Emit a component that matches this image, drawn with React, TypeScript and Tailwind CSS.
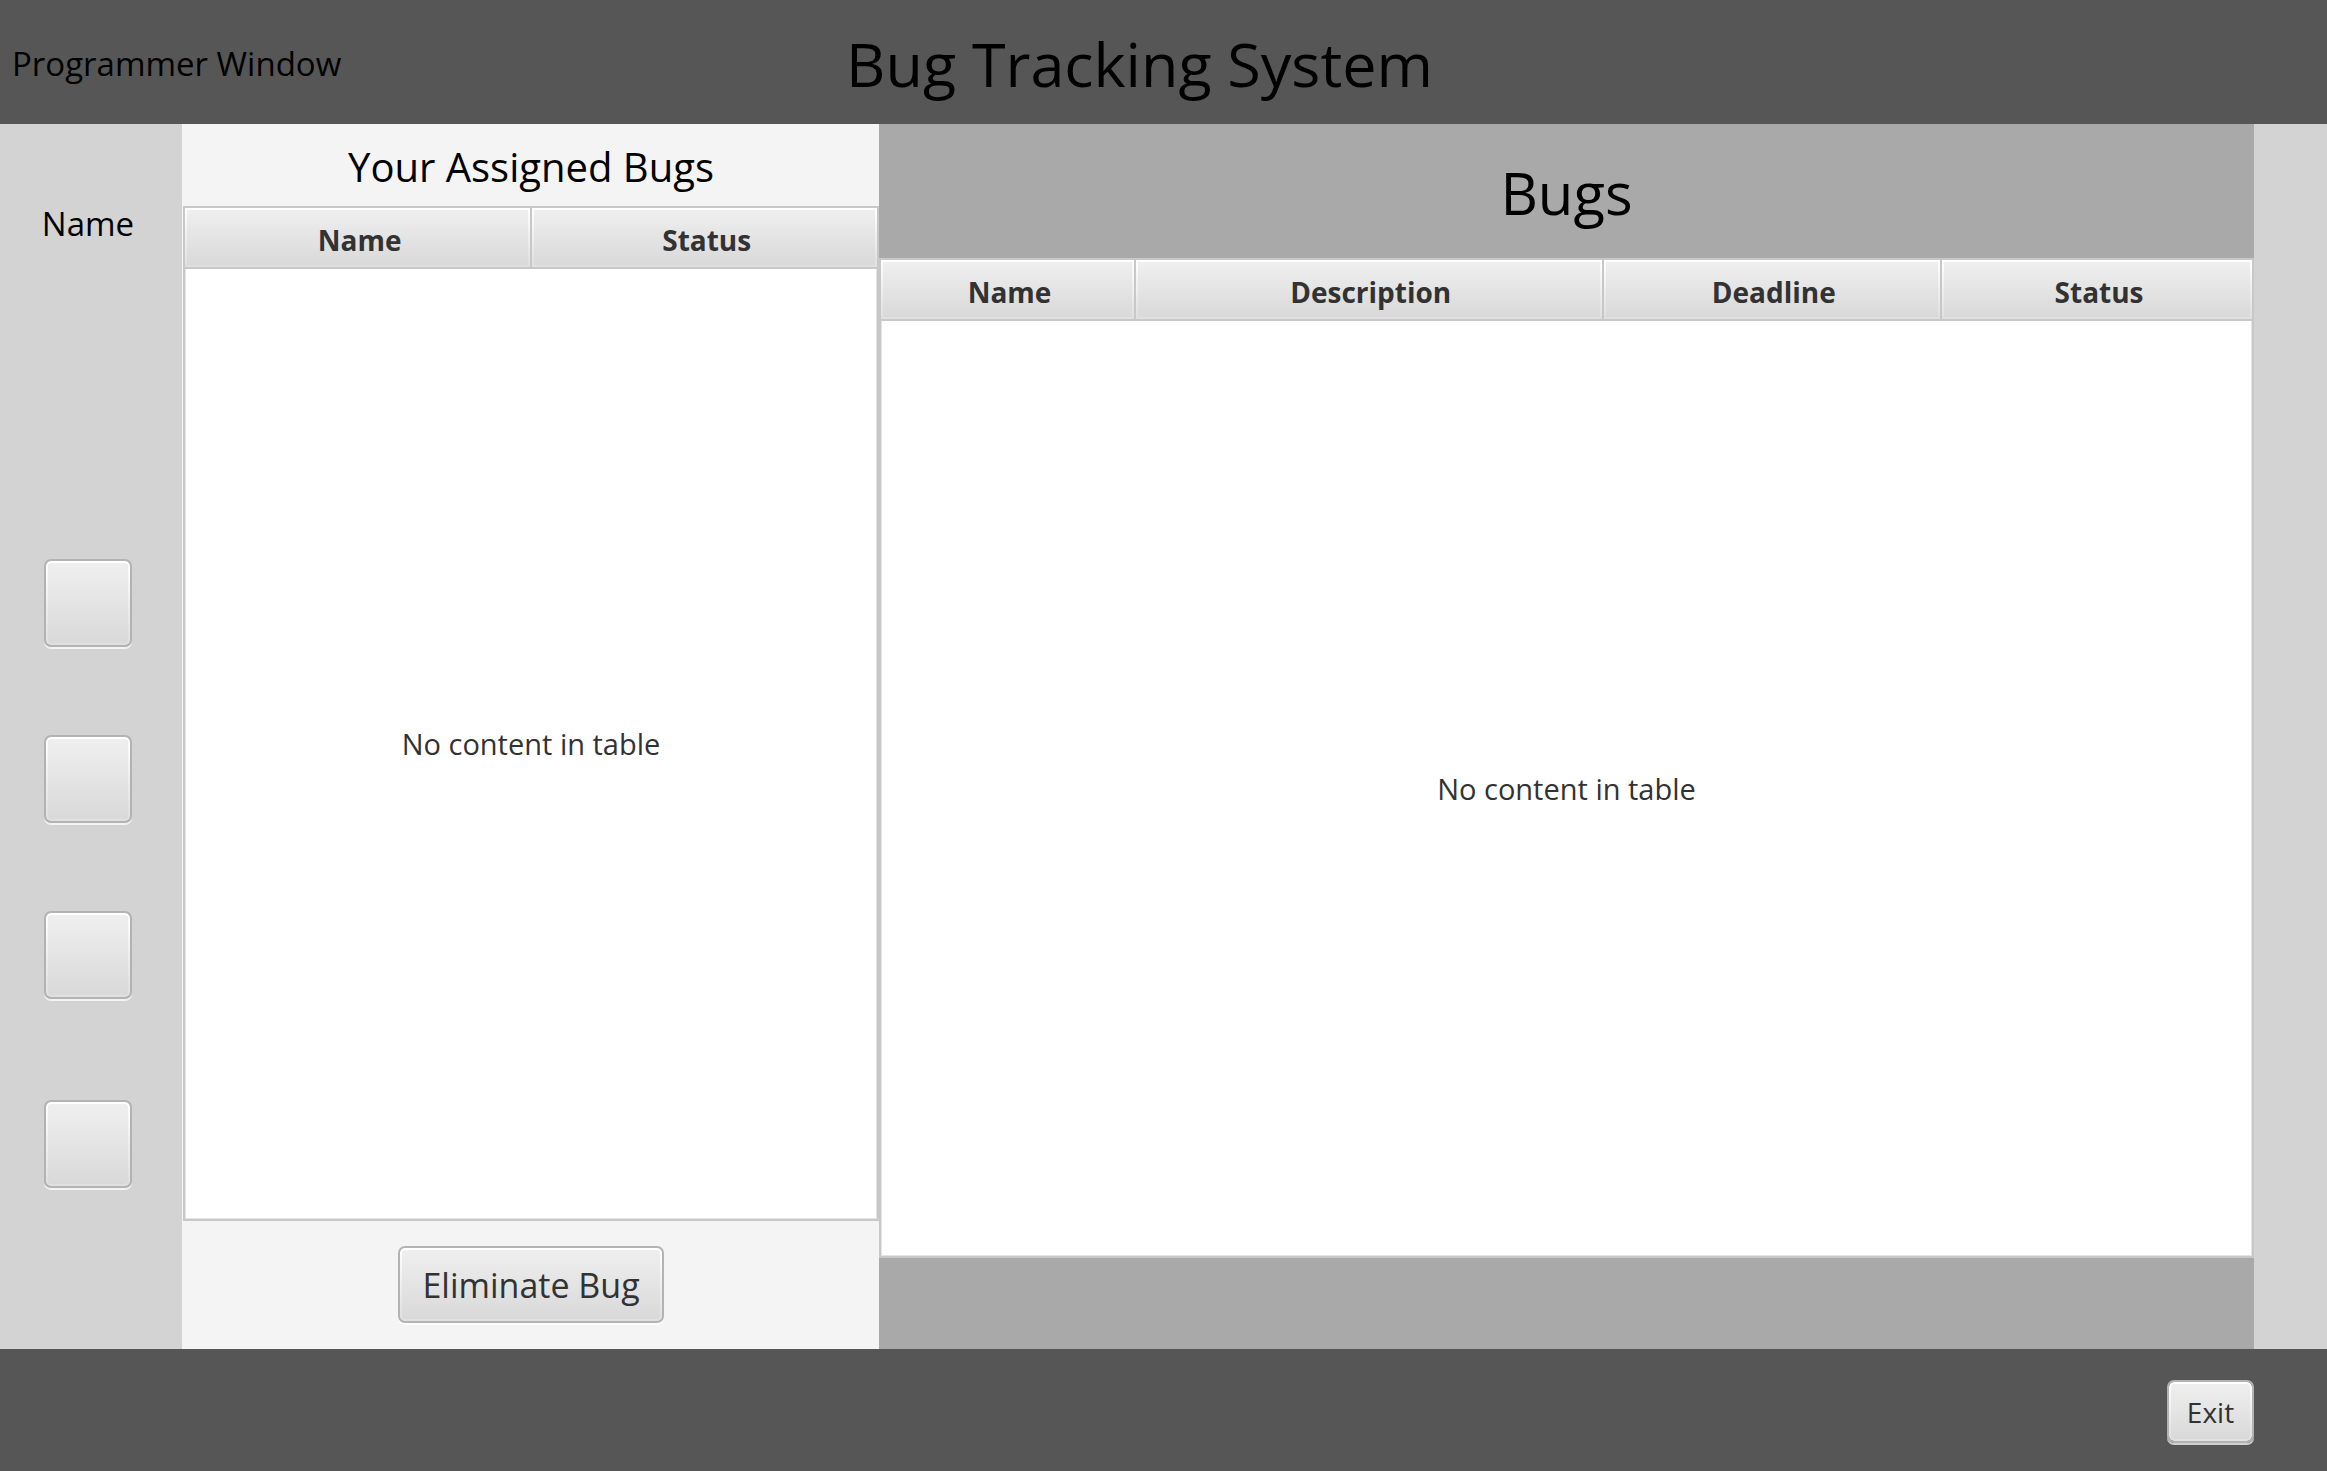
const COMIC = "font-['Comic_Sans_MS','Open_Sans',sans-serif]";

const raised =
  "flex rounded-[7px] border-2 border-[#b3b3b3] p-0.5 text-[#323232] shadow-[0_2px_0_rgba(255,255,255,0.72)] [background:linear-gradient(#efefef,#d9d9d9)_content-box,linear-gradient(#ffffff,#dfdfdf)_padding-box]";

type Column = { label: string; width: string };

function EmptyTable({ label, columns }: { label: string; columns: Column[] }) {
  return (
    <div className="grid flex-1">
      <table
        aria-label={label}
        className="h-full w-full table-fixed border-separate border-spacing-0 border-2 border-[#c8c8c8] bg-white text-[#323232] shadow-[inset_0_0_0_1px_#e4e4e4]"
      >
        <colgroup>
          {columns.map((c) => (
            <col key={c.label} style={{ width: c.width }} />
          ))}
        </colgroup>
        <thead>
          <tr>
            {columns.map((c) => (
              <th
                key={c.label}
                scope="col"
                className="h-[61px] border-r-2 border-b-2 border-[#c8c8c8] p-0 pt-1 pl-1 text-center align-middle text-[28px] leading-8 font-bold [background:linear-gradient(#efefef,#d9d9d9)_center/calc(100%_-_4px)_calc(100%_-_4px)_no-repeat_padding-box,linear-gradient(#ffffff,#dfdfdf)_padding-box] last:border-r-0"
              >
                {c.label}
              </th>
            ))}
          </tr>
        </thead>
        <tbody>
          <tr>
            <td colSpan={columns.length} className="p-0 text-center align-middle text-[29px] leading-8">
              No content in table
            </td>
          </tr>
        </tbody>
      </table>
    </div>
  );
}

function SideButton({ label }: { label: string }) {
  return (
    <button type="button" aria-label={label} className={`${raised} size-[88px]`}>
      <span className="flex-1" />
    </button>
  );
}

export default function App() {
  return (
    <div className="flex min-h-screen flex-col bg-[#d3d3d3] font-['Segoe_UI','Open_Sans',sans-serif] text-black">
      <header className="grid h-[124px] grid-cols-[1fr_auto_1fr] items-center bg-[#565656] pt-1 pr-[60px] pl-3">
        <p className="text-[33px] leading-10">Programmer Window</p>
        <h1 className={`${COMIC} text-[61px] leading-[72px]`}>Bug Tracking System</h1>
      </header>

      <main className="grid flex-1 grid-cols-[182px_697fr_1375fr_73px]">
        <nav aria-label="Actions" className="flex flex-col items-center pt-20 pr-1.5">
          <p className={`${COMIC} text-[33px] leading-10`}>Name</p>
          <div className="mt-[315px] flex flex-col gap-[88px]">
            <SideButton label="First action" />
            <SideButton label="Second action" />
            <SideButton label="Third action" />
          </div>
          <div className="mt-[101px]">
            <SideButton label="Fourth action" />
          </div>
        </nav>

        <section className="flex flex-col bg-[#f4f4f4] pl-px">
          <h2 className={`${COMIC} flex h-[82px] items-center justify-center pt-1 text-[40px] leading-12`}>
            Your Assigned Bugs
          </h2>
          <EmptyTable
            label="Your Assigned Bugs"
            columns={[
              { label: "Name", width: "50.2%" },
              { label: "Status", width: "49.8%" },
            ]}
          />
          <div className="flex h-32 justify-center pt-[25px]">
            <button type="button" className={`${raised} ${COMIC} h-[77px] w-[266px]`}>
              <span className="flex flex-1 items-center justify-center self-stretch text-[34px] leading-10">
                Eliminate Bug
              </span>
            </button>
          </div>
        </section>

        <section className="flex flex-col bg-[#a9a9a9]">
          <h2 className={`${COMIC} flex h-[134px] items-center justify-center pt-1 text-[58px] leading-[72px]`}>
            Bugs
          </h2>
          <EmptyTable
            label="Bugs"
            columns={[
              { label: "Name", width: "18.6%" },
              { label: "Description", width: "34.1%" },
              { label: "Deadline", width: "24.7%" },
              { label: "Status", width: "22.6%" },
            ]}
          />
          <div className="h-[91px]" />
        </section>
      </main>

      <footer className="flex h-[122px] items-start justify-end bg-[#565656] pt-[31px] pr-[73px]">
        <button type="button" className={`${raised} h-[63px] w-[87px]`}>
          <span className="flex flex-1 items-center justify-center self-stretch text-[28px] leading-8">Exit</span>
        </button>
      </footer>
    </div>
  );
}
